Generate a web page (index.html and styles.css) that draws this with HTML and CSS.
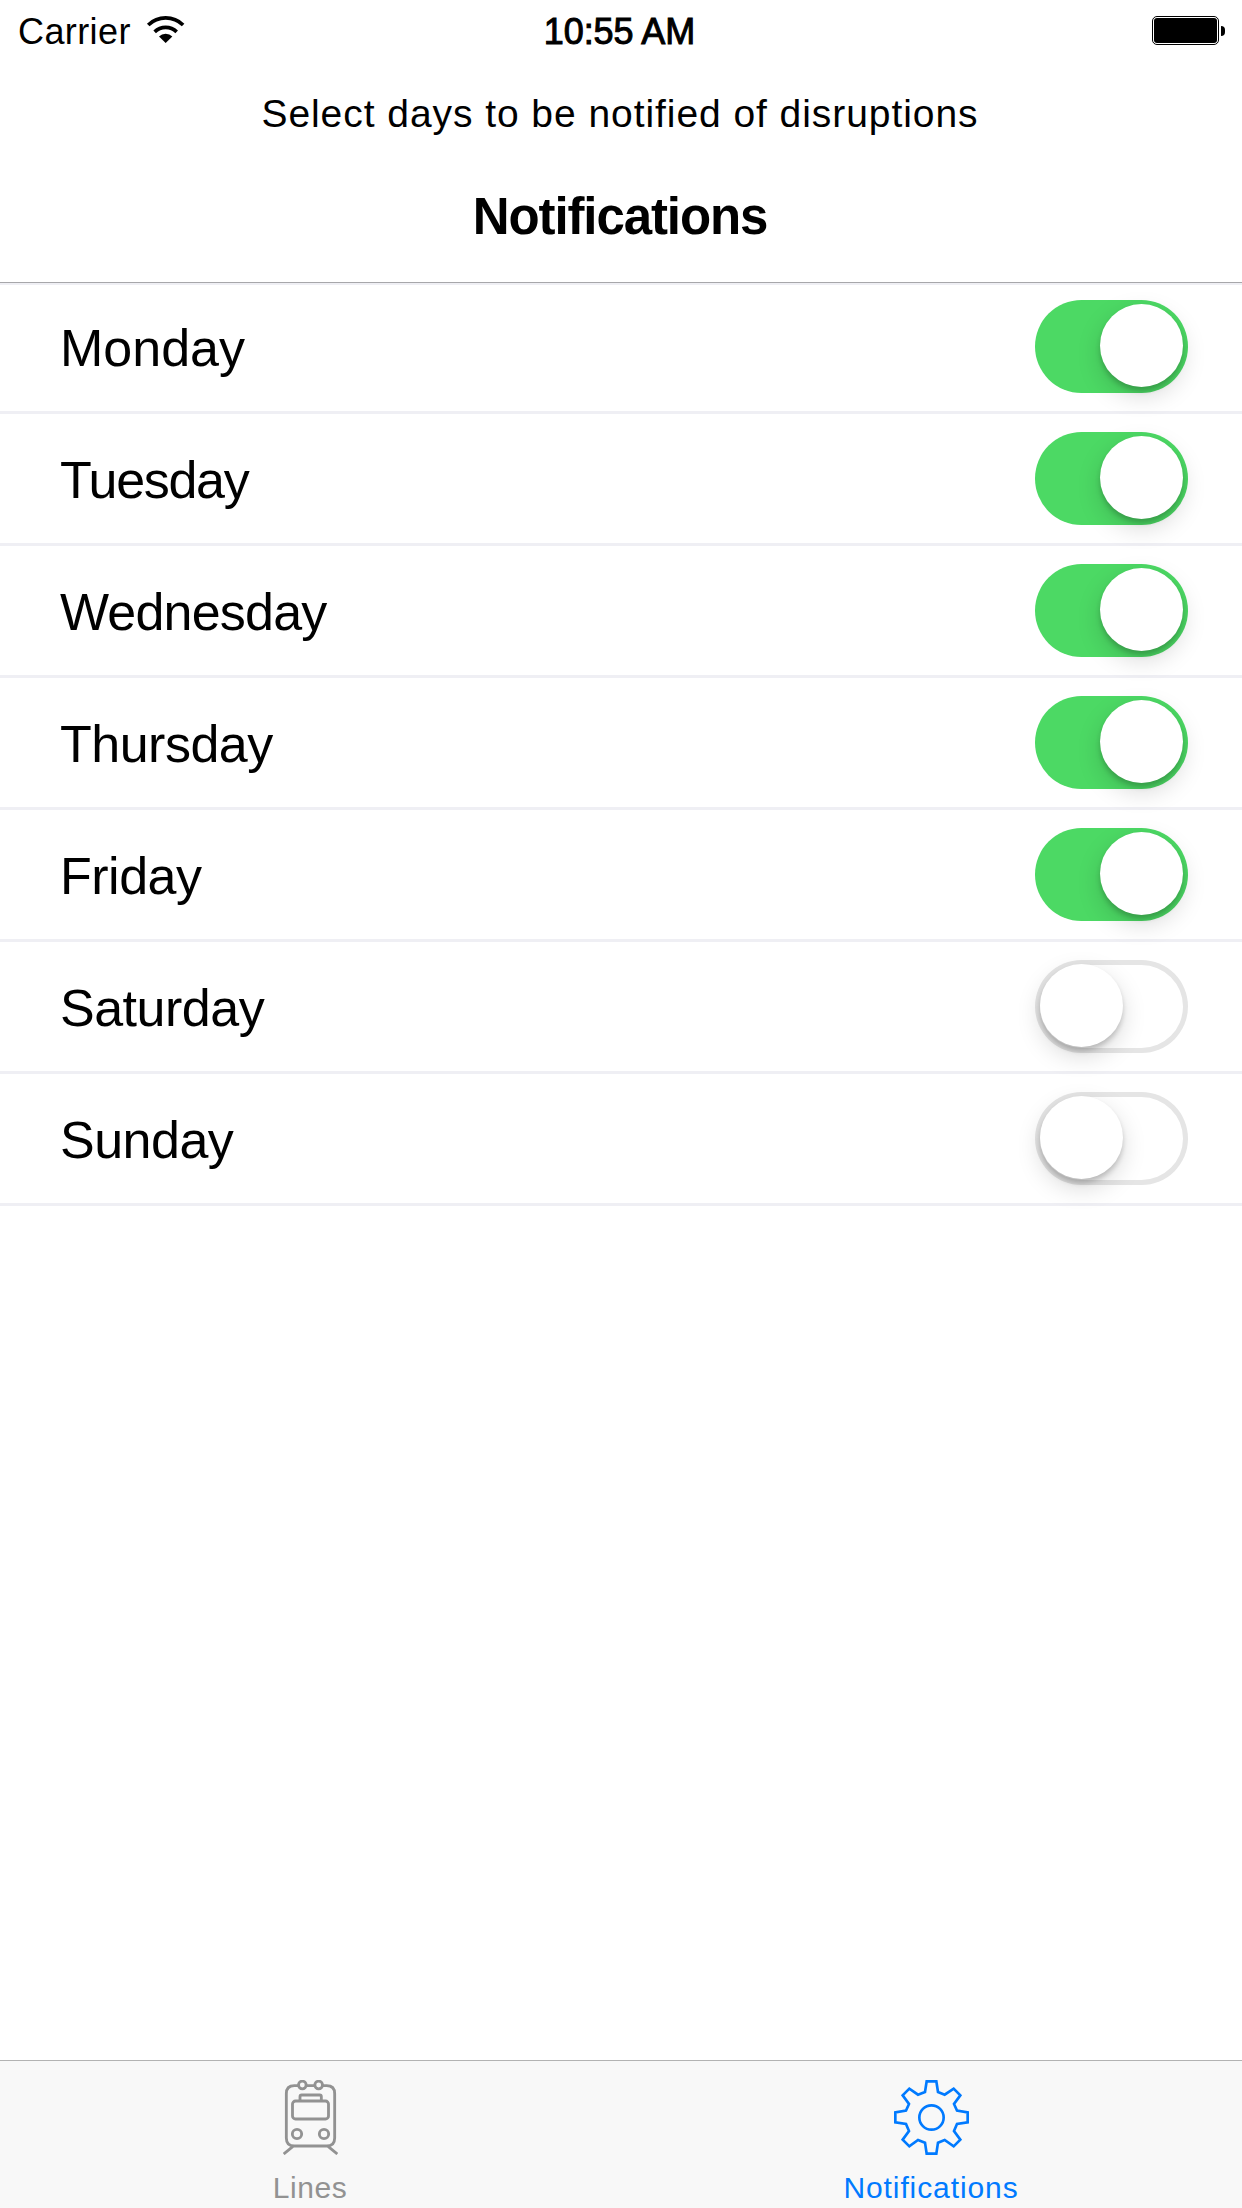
FILE: index.html
```html
<!DOCTYPE html>
<html lang="en">
<head>
<meta charset="utf-8">
<title>Notifications</title>
<link rel="stylesheet" href="styles.css">
</head>
<body>
<div class="screen">
  <header class="header">
    <div class="status">
      <div class="status-left">
        <span class="carrier">Carrier</span>
        <svg class="wifi" viewBox="438 45 117 87">
          <g fill="none" stroke="#000" stroke-width="11">
            <path d="M444.700 75A75 75 0 0 1 549.300 75"/>
            <path d="M464 95.500A47 47 0 0 1 530 95.500"/>
          </g>
          <path d="M497 129L477 109.500A28 28 0 0 1 517 109.500Z"/>
        </svg>
      </div>
      <span class="time">10:55 AM</span>
      <div class="status-right">
        <div class="battery"><div class="battery-level"></div></div>
        <div class="battery-cap"></div>
      </div>
    </div>
    <p class="prompt">Select days to be notified of disruptions</p>
    <h1 class="title">Notifications</h1>
  </header>
  <main class="list">
    <div class="row"><span class="day monday">Monday</span><div class="switch on"><div class="thumb"></div></div></div>
    <div class="row"><span class="day tuesday">Tuesday</span><div class="switch on"><div class="thumb"></div></div></div>
    <div class="row"><span class="day wednesday">Wednesday</span><div class="switch on"><div class="thumb"></div></div></div>
    <div class="row"><span class="day">Thursday</span><div class="switch on"><div class="thumb"></div></div></div>
    <div class="row"><span class="day">Friday</span><div class="switch on"><div class="thumb"></div></div></div>
    <div class="row"><span class="day">Saturday</span><div class="switch"><div class="thumb"></div></div></div>
    <div class="row"><span class="day">Sunday</span><div class="switch"><div class="thumb"></div></div></div>
  </main>
  <nav class="tabs">
    <div class="tab">
      <svg class="train" viewBox="129 90 165 225" fill="none" stroke="currentColor" stroke-width="8.500">
        <path d="M174 107H163Q139 107 139 131V264Q139 288 163 288H260Q284 288 284 264V131Q284 107 260 107H249M199 107H224"/>
        <circle cx="187" cy="105" r="11.500"/>
        <circle cx="236" cy="105" r="11.500"/>
        <rect x="157.500" y="153" width="108" height="54" rx="9"/>
        <path d="M180 152V140Q180 135 185 135H239Q244 135 244 140V152"/>
        <circle cx="171" cy="252" r="14"/>
        <circle cx="252" cy="252" r="14"/>
        <path d="M159 289L131 312M264 289L292 312"/>
      </svg>
      <span class="tab-label lines">Lines</span>
    </div>
    <div class="tab active">
      <svg class="gear" viewBox="219 90 225 225" fill="none" stroke="currentColor" stroke-width="8">
        <path d="M317 94H346L351 126L371 134L398 116L418 136L399 162L408 182L440 187V217L408 222L399 243L418 269L398 289L371 270L351 278L346 311H317L312 278L291 270L265 289L245 269L264 243L255 222L223 217V187L255 182L264 162L245 136L265 116L291 134L312 126Z"/>
        <circle cx="331.500" cy="202.500" r="36.500"/>
      </svg>
      <span class="tab-label">Notifications</span>
    </div>
  </nav>
</div>
</body>
</html>
```
FILE: styles.css
```css
* { box-sizing: border-box; }

body {
  margin: 0;
  background: #fff;
  color: #000;
  font-family: "Liberation Sans", Arial, sans-serif;
}

.screen {
  display: flex;
  flex-direction: column;
  width: 1242px;
  height: 2208px;
}

.header {
  height: 285px;
  border-bottom: 2px solid #efeff4;
  box-shadow: inset 0 -1px 0 #a7a7aa;
  text-align: center;
}

.status {
  display: grid;
  grid-template-columns: 1fr auto 1fr;
  height: 60px;
  padding: 0 17px 0 14px;
  font-size: 36px;
  line-height: 60px;
}

.status-left { display: flex; padding-left: 4px; }
.carrier { letter-spacing: 0.4px; padding-top: 2px; }
.wifi { width: 39px; height: 29px; margin: 15px 0 0 15px; }
.time { padding-top: 2px; letter-spacing: -0.1px; -webkit-text-stroke: 1px #000; }
.status-right { display: flex; justify-content: flex-end; padding-top: 16px; }

.battery {
  width: 67px;
  height: 29px;
  padding: 1px;
  border: 1px solid #000;
  border-radius: 5px;
}

.battery-level { height: 100%; border-radius: 3px; background: #000; }

.battery-cap {
  width: 4px;
  height: 10px;
  margin: 10px 0 0 2px;
  border-radius: 0 4px 4px 0;
  background: #000;
}

.prompt {
  margin: 0;
  padding: 24px 2px 0 0;
  font-size: 39px;
  line-height: 60px;
  letter-spacing: 0.94px;
}

.title {
  margin: 0;
  padding: 43px 2px 0 0;
  font-size: 51px;
  line-height: 60px;
  letter-spacing: -1.1px;
}

.list { flex: 1; }

.row {
  display: flex;
  align-items: flex-start;
  justify-content: space-between;
  height: 132px;
  padding: 18px 54px 0 60px;
  border-bottom: 3px solid #efeff4;
}

.row:first-child { height: 129px; padding-top: 15px; }

.day { padding-top: 18px; font-size: 52px; line-height: 60px; letter-spacing: -0.5px; }
.monday { letter-spacing: 0; }
.tuesday { letter-spacing: -1.3px; }
.wednesday { letter-spacing: -0.8px; }

.switch {
  width: 153px;
  height: 93px;
  padding: 4px 5px;
  border-radius: 47px;
  box-shadow: inset 0 0 0 5px #e5e5e5;
}

.thumb {
  width: 83px;
  height: 83px;
  border-radius: 50%;
  background: #fff;
  box-shadow: 0 9px 24px rgba(0, 0, 0, 0.15), 0 4px 5px rgba(0, 0, 0, 0.18);
}

.switch.on { background: #4cd964; box-shadow: none; }
.switch.on .thumb { margin-left: 60px; }

.tabs {
  display: flex;
  height: 148px;
  border-top: 1px solid #b2b2b2;
  background: #f8f8f8;
}

.tab {
  display: flex;
  flex: 1;
  flex-direction: column;
  align-items: center;
  padding: 19px 1px 0 0;
  color: #929292;
}

.tab.active { color: #007aff; }
.tab svg { height: 75px; }
.train { width: 55px; }
.gear { width: 75px; }

.tab-label {
  padding-top: 15px;
  font-size: 30px;
  line-height: 36px;
  letter-spacing: 0.9px;
}

.tab-label.lines { letter-spacing: 0.6px; }
```
